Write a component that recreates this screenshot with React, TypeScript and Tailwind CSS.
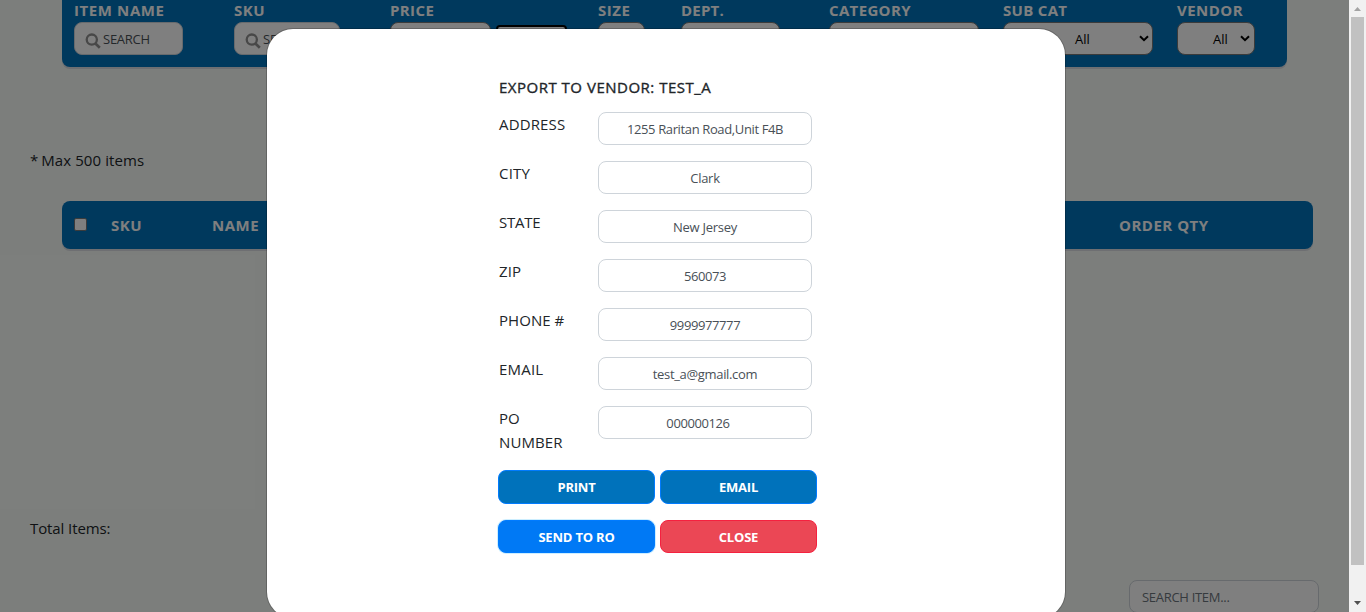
import React from "react";

const selectBox =
  "flex h-[33px] items-center rounded-[8px] border border-[#767676] bg-white text-[13px] text-black";

function Heading({ children, className = "" }: { children: React.ReactNode; className?: string }) {
  return (
    <div className={`h-[22px] whitespace-nowrap text-[15px] font-bold leading-[21px] text-white ${className}`}>
      {children}
    </div>
  );
}

function Chevron() {
  return (
    <svg className="h-[7px] w-[10px] shrink-0" viewBox="0 0 10 7" fill="none">
      <path d="M1 1.2L5 5.2L9 1.2" stroke="#000" strokeWidth="2" />
    </svg>
  );
}

function SearchBox({ className }: { className: string }) {
  return (
    <div
      className={`flex h-[33px] items-center rounded-[8px] border border-[#ced4da] bg-white pl-[10px] text-[13px] text-[#495057] ${className}`}
    >
      <svg className="mt-[5px] h-[16px] w-[16px] shrink-0" viewBox="0 0 16 16" fill="none" stroke="#909090">
        <circle cx="6.8" cy="6.6" r="5.1" strokeWidth="2.3" />
        <path d="M10.4 10.5L14.8 14.7" strokeWidth="2.7" />
      </svg>
      <span className="ml-[2px] mt-[2px] tracking-[-0.25px]">SEARCH</span>
    </div>
  );
}

const fields = [
  { label: "ADDRESS", value: "1255 Raritan Road,Unit F4B", track: "tracking-[0.15px]", valueTrack: "tracking-[-0.37px]" },
  { label: "CITY", value: "Clark", track: "tracking-[0.2px]", valueTrack: "tracking-[-0.3px]" },
  { label: "STATE", value: "New Jersey", track: "tracking-[-0.25px]", valueTrack: "tracking-[-0.25px]" },
  { label: "ZIP", value: "560073", track: "tracking-[0.1px]", valueTrack: "tracking-[-0.4px]" },
  { label: "PHONE #", value: "9999977777", track: "tracking-[0.05px]", valueTrack: "tracking-[-0.4px]" },
  { label: "EMAIL", value: "test_a@gmail.com", track: "tracking-[0.2px]", valueTrack: "tracking-[-0.33px]" },
  { label: "PO NUMBER", value: "000000126", track: "tracking-[0.1px]", valueTrack: "tracking-[-0.4px] pr-[14px]" },
];

function FilterBar() {
  return (
    <div className="ml-[62px] flex h-[67px] w-[1225px] shrink-0 rounded-b-[8px] bg-[#0072bb] pl-3 shadow-[0_2px_0_#dcdfe4]">
      <div className="w-[160px]">
        <Heading className="tracking-[0.6px]">ITEM NAME</Heading>
        <SearchBox className="w-[109px]" />
      </div>
      <div className="w-[156px]">
        <Heading className="tracking-[0.5px]">SKU</Heading>
        <SearchBox className="w-[106px]" />
      </div>
      <div className="w-[208px]">
        <Heading className="tracking-[0.4px]">PRICE</Heading>
        <div className="flex gap-[5px]">
          <div className={`${selectBox} w-[101px]`} />
          <div className="mt-[3px] h-[30px] w-[71px] rounded-[4px] border-2 border-black bg-white" />
        </div>
      </div>
      <div className="w-[83px]">
        <Heading className="tracking-[0.5px]">SIZE</Heading>
        <div className={`${selectBox} w-[47px]`} />
      </div>
      <div className="w-[148px]">
        <Heading className="tracking-[0.2px]">DEPT.</Heading>
        <div className={`${selectBox} w-[99px]`} />
      </div>
      <div className="w-[174px]">
        <Heading className="tracking-[0.35px]">CATEGORY</Heading>
        <div className={`${selectBox} w-[150px]`} />
      </div>
      <div className="w-[174px]">
        <Heading className="tracking-[0.3px]">SUB CAT</Heading>
        <div className={`${selectBox} w-[150px] justify-between pl-[71px] pr-[3px]`}>
          <span className="pt-[2px]">All</span>
          <Chevron />
        </div>
      </div>
      <div>
        <Heading className="tracking-[0.45px]">VENDOR</Heading>
        <div className={`${selectBox} w-[78px] justify-between pl-[35px] pr-[4px]`}>
          <span className="pt-[2px]">All</span>
          <Chevron />
        </div>
      </div>
    </div>
  );
}

function Page() {
  return (
    <div className="flex min-w-0 flex-1 flex-col bg-[#f9fdf9] text-[#212529]">
      <FilterBar />
      <div className="mt-[81px] pl-[30px] text-[15px] leading-6 tracking-[0.1px]">
        <span className="tracking-[-0.5px]">* </span>Max 500 items
      </div>
      <div className="ml-[62px] mt-[29px] flex h-12 w-[1251px] shrink-0 items-center rounded-[8px] bg-[#0072bb] pl-3 text-[15px] font-bold tracking-[0.5px] text-white shadow-[0_2px_0_#dcdfe4]">
        <div className="mb-[2px] h-[13px] w-[13px] rounded-[2px] border border-[#767676] bg-white" />
        <div className="ml-6 w-[101px]">SKU</div>
        <div className="w-[907px]">NAME</div>
        <div className="whitespace-nowrap">ORDER QTY</div>
      </div>
      <div className="mt-[267px] pl-[30px] text-[15px] leading-6 tracking-[-0.1px]">Total Items:</div>
      <div className="ml-[1129px] mt-[40px] flex h-[33px] w-[190px] shrink-0 items-center rounded-[8px] border border-[#ced4da] bg-white pl-3 pt-[2px] text-[13px] tracking-[-0.3px] text-[#6c757d]">
        SEARCH ITEM...
      </div>
    </div>
  );
}

function ExportDialog() {
  const button =
    "flex w-[157px] items-center justify-center rounded-[8px] border text-[13px] font-bold tracking-[-0.2px] text-white";
  return (
    <div className="absolute left-[267px] top-[29px] h-[589px] w-[798px] rounded-[26px] bg-white pl-[231px] pt-[46px] text-[#212529] shadow-[0_0_0_1px_rgba(0,0,0,0.2)]">
      <h5 className="h-[37px] pl-[1px] text-[15px] leading-6 tracking-[0.5px] [-webkit-text-stroke:0.35px_#212529]">
        EXPORT TO VENDOR: TEST_A
      </h5>
      {fields.map((f) => (
        <div key={f.label} className="flex h-[49px] pl-[1px]">
          <div className={`w-[80px] text-[15px] leading-6 ${f.track}`}>{f.label}</div>
          <div
            className={`ml-[19px] flex h-[33px] w-[214px] items-center justify-center rounded-[8px] border border-[#ced4da] pt-[2px] text-[13px] text-[#495057] ${f.valueTrack}`}
          >
            {f.value}
          </div>
        </div>
      ))}
      <div className="mt-[15px] grid w-[319px] grid-cols-2 gap-x-[5px] gap-y-4">
        <button className={`${button} h-[34px] border-[#007bff] bg-[#0072bb] pt-[1px]`}>PRINT</button>
        <button className={`${button} h-[34px] border-[#007bff] bg-[#0072bb] pt-[1px]`}>EMAIL</button>
        <button className={`${button} h-[33px] border-[#007bff] bg-[#0079f5] pt-[2px] shadow-[0_0_0_1px_#cceeff]`}>
          SEND TO RO
        </button>
        <button className={`${button} h-[33px] border-[#f5213f] bg-[#eb4755] pt-[2px]`}>CLOSE</button>
      </div>
    </div>
  );
}

function ScrollBar() {
  return (
    <div className="flex w-[17px] shrink-0 flex-col items-center bg-[#f1f1f1]">
      <svg className="h-[17px] w-[17px] shrink-0" viewBox="0 0 17 17">
        <path d="M5 11H12L8.5 7Z" fill="#a3a3a3" />
      </svg>
      <div className="h-[548px] w-[13px] bg-[#c1c1c1]" />
      <svg className="mt-[30px] h-[17px] w-[17px] shrink-0" viewBox="0 0 17 17">
        <path d="M5 6H12L8.5 10Z" fill="#505050" />
      </svg>
    </div>
  );
}

export default function App() {
  return (
    <div className="relative flex h-[612px] w-[1366px] overflow-hidden font-['Open_Sans','Noto_Sans',sans-serif]">
      <Page />
      <ScrollBar />
      <div className="absolute left-0 top-0 h-full w-[1349px] bg-black/50" />
      <ExportDialog />
    </div>
  );
}
